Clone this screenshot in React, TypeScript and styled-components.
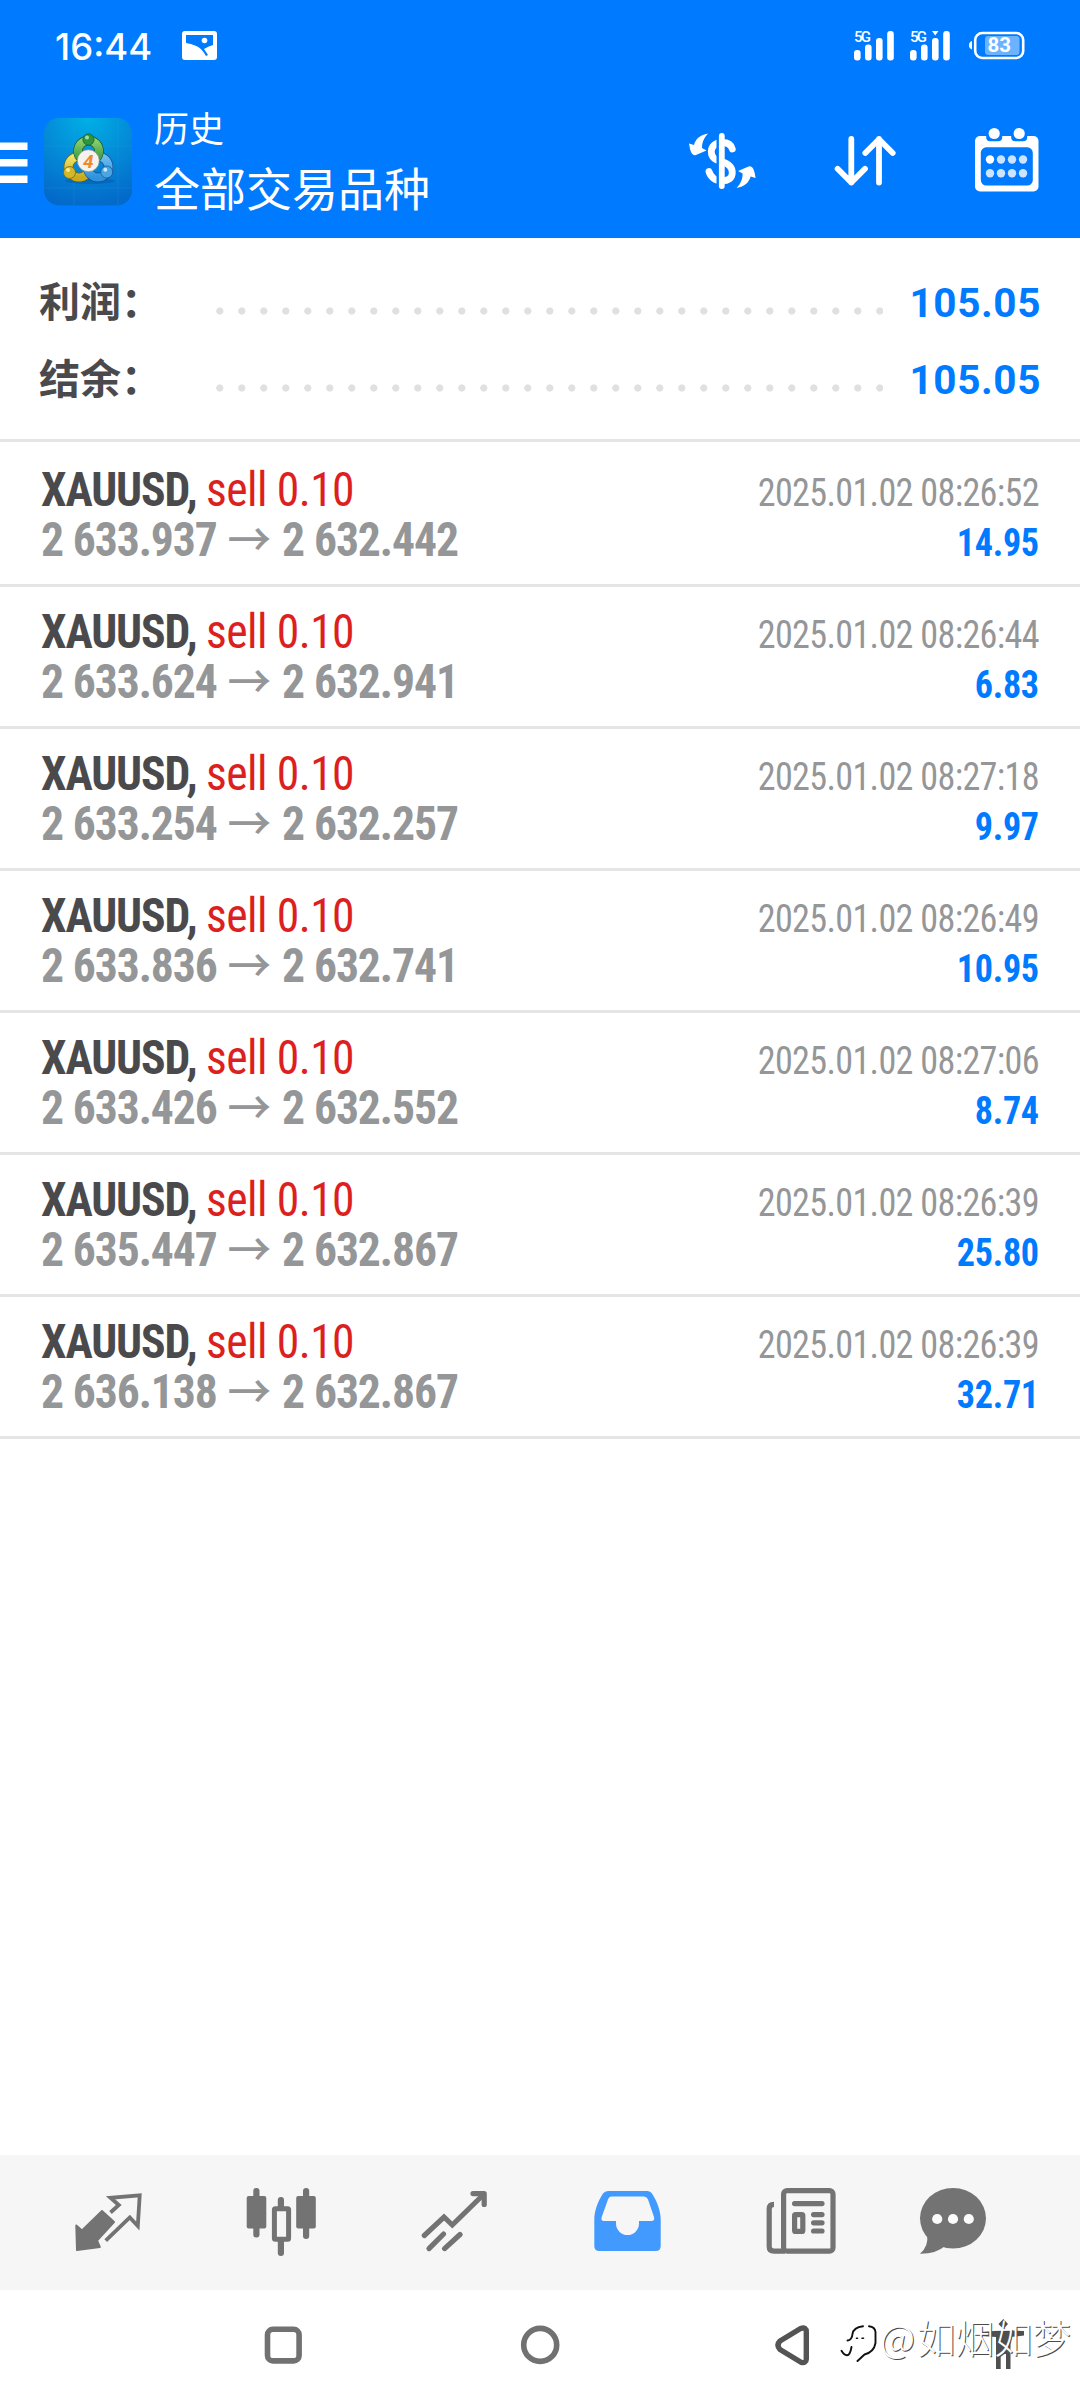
import React from 'react';
import styled, { createGlobalStyle } from 'styled-components';

const GlobalStyle = createGlobalStyle`
  * { box-sizing: border-box; }
  body { margin: 0; background: #ffffff; }
  svg { display: block; flex: none; }
`;

const Screen = styled.div`
  width: 1080px;
  height: 2400px;
  display: flex;
  flex-direction: column;
  background: #ffffff;
  overflow: hidden;
  font-family: Roboto, 'Noto Sans CJK SC', sans-serif;
`;

const Top = styled.header`
  height: 238px;
  flex: none;
  background: #007aff;
  color: #ffffff;
`;

const StatusBar = styled.div`
  height: 92px;
  display: flex;
  align-items: center;
  padding: 0 55px 0 55px;
`;

const Clock = styled.span`
  font-family: Inter, Roboto, sans-serif;
  font-size: 36.5px;
  line-height: 40px;
  font-weight: 500;
  width: 127px;
  padding-top: 2px;
`;

const Spacer = styled.div`
  flex: 1;
`;

const AppBar = styled.div`
  height: 145px;
  padding-right: 20px;
  display: flex;
`;

const Titles = styled.div`
  width: 500px;
  padding: 10px 0 0 22px;
  font-family: 'Noto Sans CJK SC', sans-serif;
  font-weight: 400;
`;

const Title = styled.div`
  font-size: 35px;
  line-height: 50px;
`;

const Subtitle = styled.div`
  font-size: 46px;
  line-height: 68px;
`;

const Summary = styled.section`
  flex: none;
  height: 204px;
  padding: 26px 39px 0 39px;
  border-bottom: 3px solid #e5e5e5;
`;

const SummaryRow = styled.div`
  height: 77px;
  display: flex;
  align-items: center;
`;

const SummaryLabel = styled.span`
  width: 177px;
  padding-bottom: 8px;
  font-family: 'Noto Sans CJK SC', sans-serif;
  font-size: 41px;
  line-height: 60px;
  font-weight: 700;
  color: #4a4a4d;
`;

const Dots = styled.div`
  width: 667px;
  height: 8px;
  margin-top: 17px;
  background: radial-gradient(circle at 3.8px 4px, #e0e0e0 3.2px, transparent 4px) 0 0 / 22px 8px repeat-x;
`;

const SummaryValue = styled.span`
  flex: 1;
  text-align: right;
  font-size: 40.5px;
  letter-spacing: 0.6px;
  font-weight: 700;
  color: #007aff;
`;

const Deals = styled.section`
  flex: 1;
  padding-top: 3px;
`;

const Deal = styled.article`
  height: 142px;
  padding: 20px 41px 0;
  border-bottom: 3px solid #e5e5e5;
  display: flex;
  justify-content: space-between;
  font-family: 'Roboto Condensed', Roboto, sans-serif;
  white-space: nowrap;
`;

const Left = styled.div`
  transform: scaleX(0.95);
  transform-origin: left;
`;

const Right = styled.div`
  padding-top: 3px;
  text-align: right;
  transform: scaleX(0.95);
  transform-origin: right;
`;

const Line = styled.div<{ $size: number; $bold?: boolean; $color: string; $track: number; $word?: number }>`
  height: 50px;
  line-height: 50px;
  font-size: ${(p) => p.$size}px;
  font-weight: ${(p) => (p.$bold ? 700 : 400)};
  color: ${(p) => p.$color};
  letter-spacing: ${(p) => p.$track}px;
  word-spacing: ${(p) => p.$word ?? 0}px;
`;

const Side = styled.span`
  font-weight: 400;
  letter-spacing: -0.6px;
  color: #dc1f1f;
`;

const Arrow = styled.span`
  margin: 0 1px 0 1px;
  font-family: 'Noto Sans CJK SC', sans-serif;
  font-size: 46px;
  font-weight: 500;
  letter-spacing: 0;
  line-height: 0;
`;

const Tabs = styled.nav`
  flex: none;
  height: 135px;
  padding-left: 22px;
  display: flex;
  background: #f6f6f6;
`;

const SystemBar = styled.footer`
  position: relative;
  flex: none;
  height: 110px;
  padding-left: 155px;
  display: flex;
`;

const Watermark = styled.div`
  position: absolute;
  left: 838px;
  top: 20px;
  display: flex;
  align-items: center;
  font-family: 'Noto Sans CJK SC', sans-serif;
  font-size: 38.5px;
  line-height: 50px;
  font-weight: 300;
  color: #ffffff;
  text-shadow: 1px 1px 0 #4a4a4a;
  white-space: nowrap;
`;

const At = styled.span`
  margin-left: -3px;
  margin-right: 2px;
`;

const GREY = '#737373';

const PictureIcon = () => (
  <svg width="36" height="30" viewBox="0 0 36 30">
    <rect x="0" y="0" width="35" height="29" rx="3" fill="#fff" />
    <path d="M4 4H31V14Q27 15 22 18L26 24L24 25Q20 17 13 14.5Q9 12.5 4 12Z" fill="#007aff" />
    <circle cx="22.5" cy="9.5" r="2.8" fill="#fff" />
  </svg>
);

const Signal = ({ x }: { x: number }) => (
  <g transform={`translate(${x} 0)`} fill="#fff">
    <text x="0" y="42" fontSize="15" fontWeight="500" fontFamily="Roboto, sans-serif" textLength="17">5G</text>
    <rect x="0" y="50" width="6.6" height="10.5" rx="3" />
    <rect x="11" y="44.5" width="6.6" height="16" rx="3" />
    <rect x="22" y="38" width="6.6" height="22.5" rx="3" />
    <rect x="33.2" y="31" width="6.6" height="29.5" rx="3" />
  </g>
);

const StatusIcons = () => (
  <svg width="172" height="40" viewBox="854 26 172 40">
    <Signal x={855} />
    <Signal x={911} />
    <path d="M933 31H939.5L936.2 35.5Z" fill="#fff" />
    <path d="M973 41Q970 42 970 45.3Q970 48.5 973 49.5Z" fill="#fff" />
    <rect x="976.2" y="33" width="48" height="25" rx="7" fill="none" stroke="#fff" strokeWidth="2.6" />
    <rect x="986" y="36" width="34.5" height="19" rx="3" fill="#fff" opacity=".42" />
    <text x="988.5" y="52.3" fontSize="20.5" fontWeight="700" fontFamily="Roboto, sans-serif" fill="#fff">83</text>
  </svg>
);

const MenuIcon = () => (
  <svg width="44" height="145" viewBox="0 92 44 145" fill="#fff">
    <path d="M0 142.5H27.5V150H0ZM0 159H27.5V166.5H0ZM0 175.5H27.5V183H0Z" />
  </svg>
);

const Logo = () => (
  <svg width="88" height="145" viewBox="44 92 88 145">
    <defs>
      <radialGradient id="bg" cx=".5" cy="0" r="1">
        <stop offset="0" stopColor="#00b0e6" />
        <stop offset=".55" stopColor="#0488d6" />
        <stop offset="1" stopColor="#036aca" />
      </radialGradient>
      <linearGradient id="green" x1="0" y1="0" x2="0" y2="1">
        <stop offset="0" stopColor="#8ccf6a" />
        <stop offset="1" stopColor="#2f9440" />
      </linearGradient>
      <linearGradient id="yellow" x1="0" y1="0" x2="0" y2="1">
        <stop offset="0" stopColor="#f1e46a" />
        <stop offset="1" stopColor="#c9aa1c" />
      </linearGradient>
      <linearGradient id="blue" x1="0" y1="0" x2="0" y2="1">
        <stop offset="0" stopColor="#6fbdf0" />
        <stop offset="1" stopColor="#2f93dc" />
      </linearGradient>
    </defs>
    <rect x="44" y="118" width="88" height="87.5" rx="15" fill="url(#bg)" />
    <path d="M74 118V205M118 118V205M44 146H132M44 188H132" stroke="#39a8e6" strokeWidth=".6" opacity=".3" />
    <ellipse cx="90" cy="181" rx="25" ry="3" fill="#05438f" opacity=".3" />
    <g fill="none">
      <circle cx="79" cy="167" r="10.5" stroke="#6d6412" strokeWidth="9.4" />
      <circle cx="79" cy="167" r="10.5" stroke="url(#yellow)" strokeWidth="8.2" />
      <circle cx="98" cy="167" r="10.5" stroke="#0f4d8c" strokeWidth="9.4" />
      <circle cx="98" cy="167" r="10.5" stroke="url(#blue)" strokeWidth="8.2" />
      <circle cx="88.5" cy="151" r="10.5" stroke="#15562a" strokeWidth="9.4" />
      <circle cx="88.5" cy="151" r="10.5" stroke="url(#green)" strokeWidth="8.2" />
    </g>
    <circle cx="88.5" cy="139.5" r="5.6" fill="#2f9440" stroke="#17602a" strokeWidth=".8" />
    <circle cx="69.5" cy="172.5" r="6" fill="#d3b92a" stroke="#75681a" strokeWidth=".8" />
    <circle cx="106.7" cy="172" r="6" fill="#4aa5e0" stroke="#14589a" strokeWidth=".8" />
    <circle cx="87" cy="137.5" r="2" fill="#a6dc9a" />
    <circle cx="68" cy="170" r="2" fill="#f5eba0" />
    <circle cx="105.3" cy="169.7" r="2" fill="#c8e8fb" />
    <circle cx="88.3" cy="160.7" r="11" fill="#f6f3ee" stroke="#8b8a80" strokeWidth=".7" />
    <text x="88.3" y="167.5" textAnchor="middle" fontSize="19" fontWeight="700" fontStyle="italic" fontFamily="Roboto, sans-serif" fill="#f08a28">4</text>
  </svg>
);

const CurrencyIcon = () => (
  <svg width="146" height="145" viewBox="654 92 146 145">
    <path
      d="M732.3 149C731 143.5 726.5 142.5 722 142.5C714.5 142.5 711.3 147.5 711.3 151.5C711.3 158.5 716 160 722 161.7C729 163.8 732.3 167.5 732.3 172.5C732.3 178.5 728 180.8 722 180.8C715 180.8 710.5 177 709 171.5"
      fill="none" stroke="#fff" strokeWidth="6.8" strokeLinecap="round"
    />
    <path d="M718 135V190" stroke="#007aff" strokeWidth="3" />
    <path d="M721.8 136V186" stroke="#fff" strokeWidth="5.8" strokeLinecap="round" />
    <path id="turn" d="M708 133.5C700 135 695.5 139 694 145L689 143.5L690 149Q692 156.5 696 155L706.5 150.5L702 148C702 142 704 138 708 133.5Z" fill="#fff" />
    <use href="#turn" transform="rotate(180 722.3 160.7)" />
  </svg>
);

const SortIcon = () => (
  <svg width="130" height="145" viewBox="800 92 130 145" fill="none" stroke="#fff" strokeWidth="5.8" strokeLinecap="round" strokeLinejoin="round">
    <path d="M851.3 139V182.5M837.6 168.8L851.3 182.5L865 168.8M879 182.5V139M865.3 153L879 139.3L892.7 153" />
  </svg>
);

const CalendarIcon = () => (
  <svg width="130" height="145" viewBox="930 92 130 145">
    <rect x="975" y="136" width="63.5" height="55.5" rx="5" fill="#fff" />
    <rect x="980.8" y="147.3" width="52" height="38.3" rx="5.5" fill="#007aff" />
    {[994.2, 1019.2].map((x) => (
      <g key={x}>
        <rect x={x - 8} y="130" width="16" height="11.3" rx="4" fill="#007aff" />
        <circle cx={x} cy="133.5" r="5.6" fill="#fff" />
      </g>
    ))}
    {[159.5, 173.2].map((y, r) =>
      [990, 1001, 1012, 1023].map((x, c) => (
        <circle key={`${x}${y}`} cx={x} cy={y} r="4.2" fill={r + c === 0 ? '#ffffff' : '#cce4ff'} />
      )),
    )}
  </svg>
);

const QuotesIcon = () => (
  <svg width="173" height="135" viewBox="22 2155 173 135">
    <path d="M76.3 2225.5L82 2230.5L102 2211L114 2222L97 2240.5L99.8 2247L77 2250Z" fill={GREY} stroke={GREY} strokeWidth="2" strokeLinejoin="round" />
    <path d="M110.5 2212.5L118.8 2205L110.5 2197.8L139.7 2195.3L137.8 2226L129.8 2217.5L105.7 2240.7" fill="none" stroke={GREY} strokeWidth="3.8" />
  </svg>
);

const CandlesIcon = () => (
  <svg width="173" height="135" viewBox="195 2155 173 135" fill={GREY}>
    <rect x="246.7" y="2196" width="19.6" height="32.5" rx="2" />
    <rect x="253.3" y="2188" width="6.2" height="49.5" rx="3" />
    <rect x="296.2" y="2196" width="19.6" height="32.5" rx="2" />
    <rect x="303" y="2188" width="6.2" height="51" rx="3" />
    <rect x="277.8" y="2197" width="6.2" height="15" rx="3" />
    <rect x="277.8" y="2238" width="6.2" height="18" rx="3" />
    <rect x="274.4" y="2208.8" width="14.2" height="30.4" rx="1" fill="#f6f6f6" stroke={GREY} strokeWidth="5" />
  </svg>
);

const TrendIcon = () => (
  <svg width="173" height="135" viewBox="368 2155 173 135" fill="none" stroke={GREY} strokeWidth="5.2" strokeLinecap="round">
    <path d="M424.3 2235.5L444 2217L452.3 2225L483 2195" />
    <path d="M473 2193.6H484.2V2204.4" strokeLinejoin="round" />
    <path d="M429 2248.6L443.6 2234M444.6 2248.6L460 2234.5" />
  </svg>
);

const InboxIcon = () => (
  <svg width="173" height="135" viewBox="541 2155 173 135">
    <path
      fillRule="evenodd"
      fill="#429aff"
      d="M608 2191H647.5Q650.5 2191 652 2193.5C657 2201 660.7 2211 660.7 2219V2246Q660.7 2251 655.7 2251H599.3Q594.3 2251 594.3 2246V2219C594.3 2211 598 2201 603 2193.5Q604.8 2191 608 2191ZM611.5 2196.5H643.5Q646.5 2196.5 648 2199.5L654 2217Q655 2221 651.5 2221H639V2223.5A11.5 11.5 0 0 1 616 2223.5V2221H604Q600.5 2221 601.7 2217L608 2199.5Q609 2196.5 611.5 2196.5Z"
    />
  </svg>
);

const NewsIcon = () => (
  <svg width="173" height="135" viewBox="714 2155 173 135" fill="none" stroke={GREY} strokeWidth="5.2" strokeLinecap="round">
    <rect x="783.6" y="2190.6" width="49.4" height="60.6" rx="3.5" />
    <path d="M774 2204.4Q769.2 2204.4 769.2 2209V2246.5Q769.2 2251.2 774 2251.2H785" strokeLinecap="butt" />
    <path d="M794.6 2203.6H822M813.6 2214.6H822M813.6 2222.8H822M813.6 2231H822" />
    <rect x="794.6" y="2214.6" width="8.2" height="16.8" rx="1" />
  </svg>
);

const ChatIcon = () => (
  <svg width="173" height="135" viewBox="887 2155 173 135">
    <ellipse cx="953" cy="2218.3" rx="33" ry="30.3" fill={GREY} />
    <path d="M927 2234Q929 2246 920 2253.8Q936 2254 945 2246Z" fill={GREY} />
    {[937.2, 953, 968.8].map((x) => (
      <circle key={x} cx={x} cy="2219" r="5.1" fill="#fbfbfb" />
    ))}
  </svg>
);

const SystemIcons = () => (
  <>
    <svg width="257" height="110" viewBox="155 2290 257 110">
      <rect x="267.5" y="2329.3" width="31.6" height="31.6" rx="5.5" fill="none" stroke="#717171" strokeWidth="5.6" />
    </svg>
    <svg width="256" height="110" viewBox="412 2290 256 110">
      <circle cx="540.2" cy="2344.9" r="16.5" fill="none" stroke="#717171" strokeWidth="5.6" />
    </svg>
    <svg width="257" height="110" viewBox="668 2290 257 110">
      <path d="M801 2328.3L780 2341Q776 2345 780 2349.5L801 2362.3Q806.3 2363.5 806.3 2359V2332Q806.3 2327 801 2328.3Z" fill="none" stroke="#545454" strokeWidth="5.4" strokeLinejoin="round" />
    </svg>
    <svg width="155" height="110" viewBox="925 2290 155 110" fill="#4f4f4f">
      <path d="M1003.3 2319L1008 2324L1003.3 2329L998.5 2324ZM981 2332L1000 2330.5H1007L1024 2331V2335.5L1010.5 2337V2369H1006V2354H1000.7V2369H996V2337L981 2336Z" />
    </svg>
  </>
);

const WatermarkLogo = () => (
  <svg width="45" height="52" viewBox="838 2311 45 52" fill="none" strokeLinecap="round" strokeLinejoin="round">
    <path d="M841.5 2351.7Q844 2356 847 2356.3Q850 2356.5 851.5 2348M847.5 2341.5Q852 2341 852.5 2335Q853.5 2328.5 863 2327.3M869 2327.3Q875 2328 875.5 2333V2344Q874 2353 864.5 2355.5L857.5 2362" stroke="#111" strokeWidth="1.9" />
    <path d="M856.5 2339.3H857.5M862 2339.3H863.5" stroke="#111" strokeWidth="1.6" />
  </svg>
);

interface DealData {
  open: string;
  close: string;
  time: string;
  profit: string;
}

const deals: DealData[] = [
  { open: '2 633.937', close: '2 632.442', time: '2025.01.02 08:26:52', profit: '14.95' },
  { open: '2 633.624', close: '2 632.941', time: '2025.01.02 08:26:44', profit: '6.83' },
  { open: '2 633.254', close: '2 632.257', time: '2025.01.02 08:27:18', profit: '9.97' },
  { open: '2 633.836', close: '2 632.741', time: '2025.01.02 08:26:49', profit: '10.95' },
  { open: '2 633.426', close: '2 632.552', time: '2025.01.02 08:27:06', profit: '8.74' },
  { open: '2 635.447', close: '2 632.867', time: '2025.01.02 08:26:39', profit: '25.80' },
  { open: '2 636.138', close: '2 632.867', time: '2025.01.02 08:26:39', profit: '32.71' },
];

export default function App() {
  return (
    <Screen>
      <GlobalStyle />
      <Top>
        <StatusBar>
          <Clock>16:44</Clock>
          <PictureIcon />
          <Spacer />
          <StatusIcons />
        </StatusBar>
        <AppBar>
          <MenuIcon />
          <Logo />
          <Titles>
            <Title>历史</Title>
            <Subtitle>全部交易品种</Subtitle>
          </Titles>
          <Spacer />
          <CurrencyIcon />
          <SortIcon />
          <CalendarIcon />
        </AppBar>
      </Top>
      <Summary>
        {['利润：', '结余：'].map((label) => (
          <SummaryRow key={label}>
            <SummaryLabel>{label}</SummaryLabel>
            <Dots />
            <SummaryValue>105.05</SummaryValue>
          </SummaryRow>
        ))}
      </Summary>
      <Deals>
        {deals.map((d) => (
          <Deal key={d.open}>
            <Left>
              <Line $size={48} $bold $color="#4a4a4d" $track={-1.15}>
                XAUUSD, <Side>sell 0.10</Side>
              </Line>
              <Line $size={48} $bold $color="#949698" $track={-1.15} $word={0.5}>
                {d.open} <Arrow>→</Arrow> {d.close}
              </Line>
            </Left>
            <Right>
              <Line $size={38} $color="#949698" $track={-0.7}>{d.time}</Line>
              <Line $size={38} $bold $color="#007aff" $track={-0.3}>{d.profit}</Line>
            </Right>
          </Deal>
        ))}
      </Deals>
      <Tabs>
        <QuotesIcon />
        <CandlesIcon />
        <TrendIcon />
        <InboxIcon />
        <NewsIcon />
        <ChatIcon />
      </Tabs>
      <SystemBar>
        <SystemIcons />
        <Watermark>
          <WatermarkLogo />
          <At>@</At>如烟如梦
        </Watermark>
      </SystemBar>
    </Screen>
  );
}
